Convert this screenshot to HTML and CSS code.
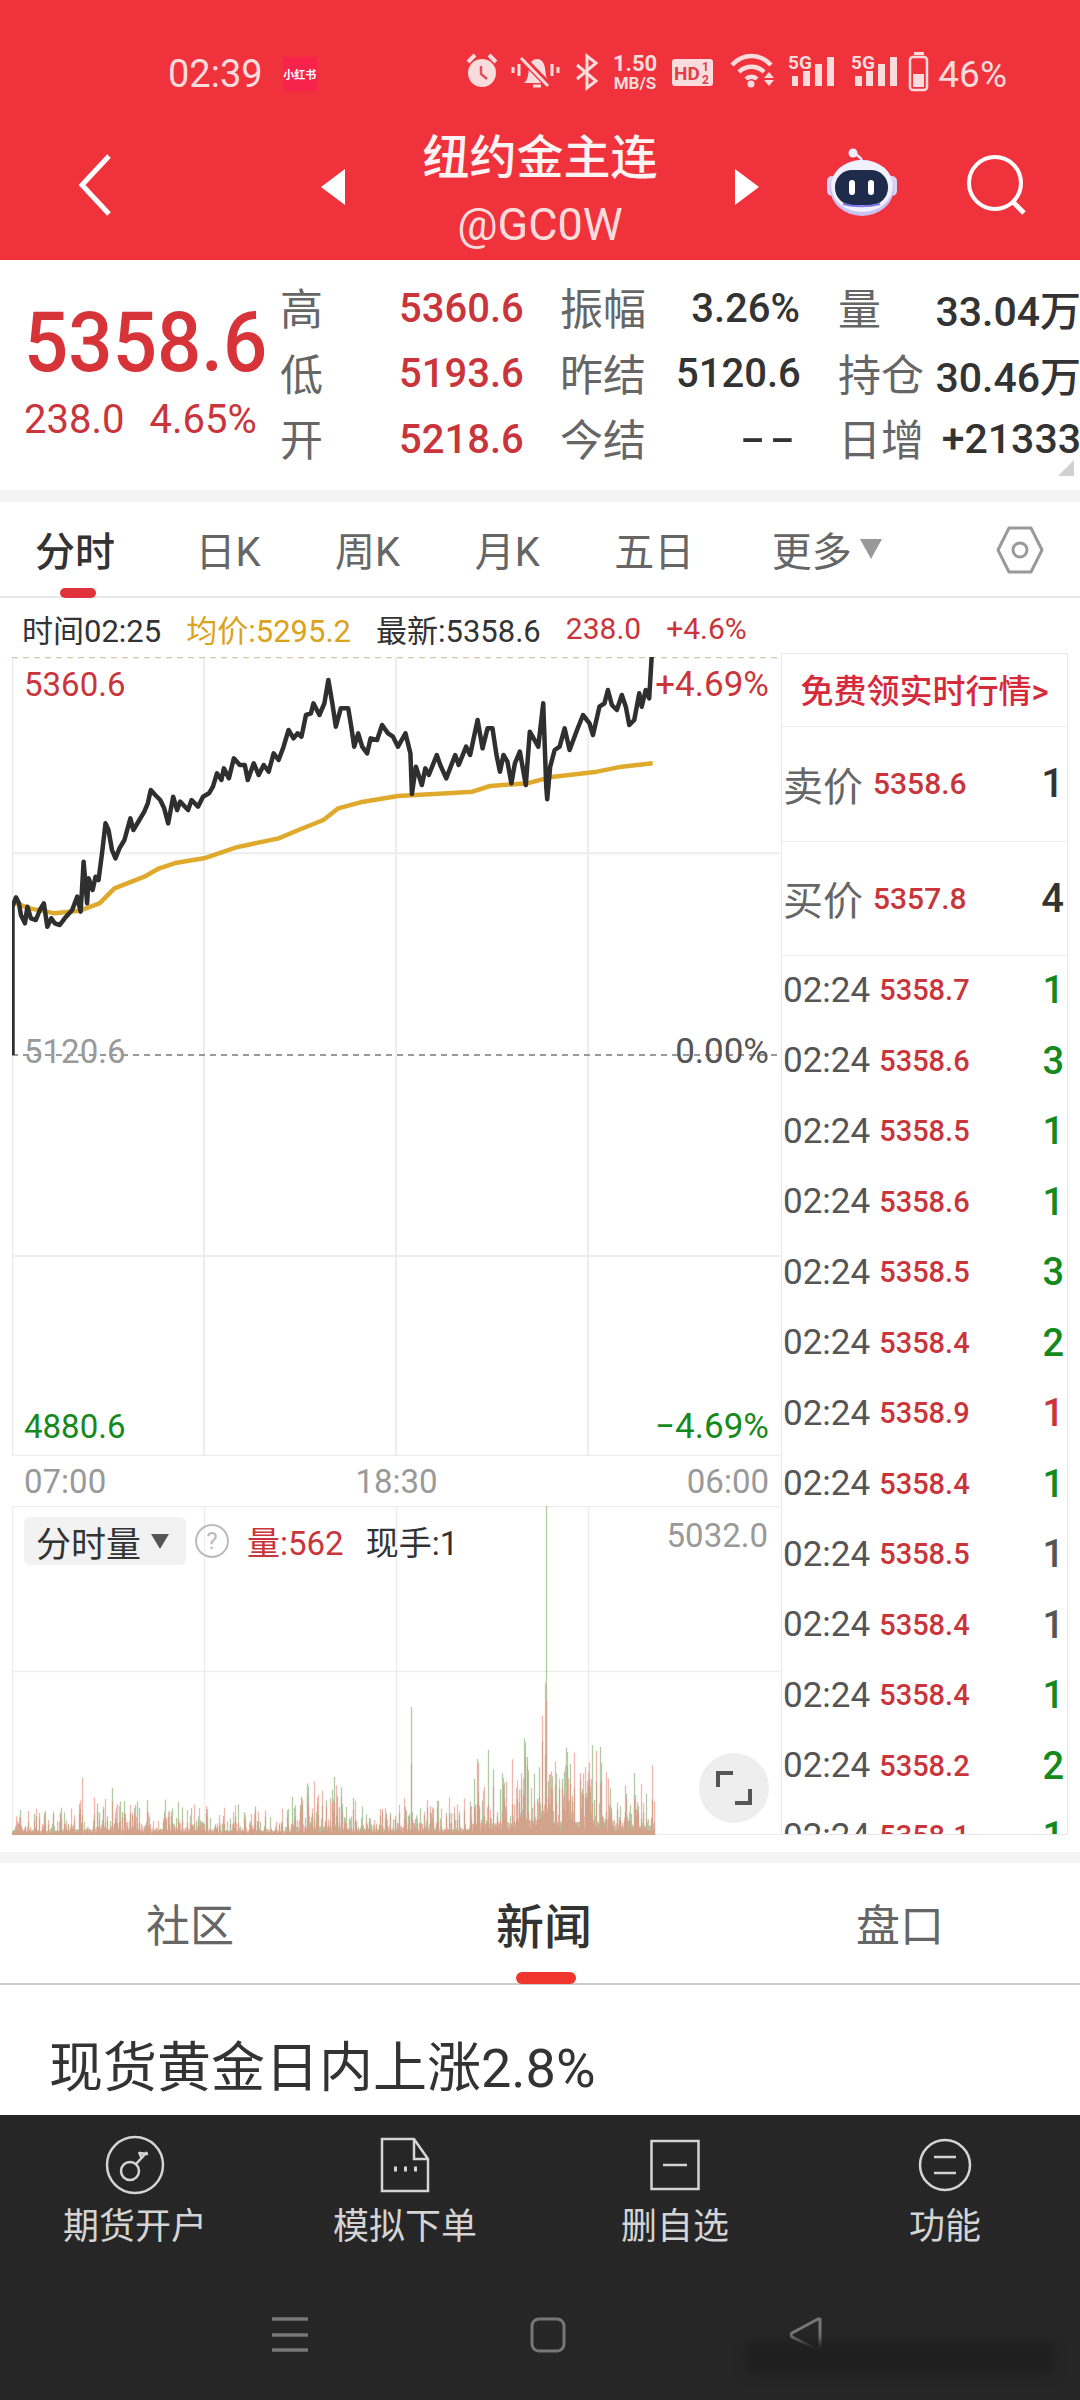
FILE: index.html
```html
<!DOCTYPE html>
<html lang="zh">
<head>
    <meta charset="UTF-8">
    <title>纽约金主连</title>
    <link rel="stylesheet" href="styles.css">
</head>
<body>
<div class="header">
    <div class="status">
        <span class="clock">02:39</span>
        <span class="badge">小红书</span>
        <svg class="status-icons" width="468" height="50" viewBox="467 50 468 50">
            <circle cx="483" cy="74" r="14" fill="#fbdcdc"/>
            <path d="M469 63l7-7M490 56l7 7" fill="none" stroke="#fbdcdc" stroke-width="4"/>
            <path d="M482 67v8l6 5" fill="none" stroke="#e0505a" stroke-width="2.5"/>
            <path d="M525 84c4-3 4-8 5-15 1-6 4-9 8-9s7 3 8 9c1 7 1 12 5 15z" fill="#fbdcdc"/>
            <path d="M534 87h8" stroke="#fbdcdc" stroke-width="3"/>
            <path d="M514 68v6M520 65v12M553 65v12M559 68v6" stroke="#fbdcdc" stroke-width="3"/>
            <path d="M524 60l27 28" stroke="#f0323c" stroke-width="7"/>
            <path d="M522 59l27 28" stroke="#fbdcdc" stroke-width="3"/>
            <path d="M578 66l19 16-9 7V57l9 7-19 16" fill="none" stroke="#fbdcdc" stroke-width="3"/>
            <text x="636" y="72" class="si-speed" text-anchor="middle">1.50</text>
            <text x="636" y="90" class="si-unit" text-anchor="middle">MB/S</text>
            <rect x="673" y="60" width="41" height="27" rx="3" fill="#fbdcdc"/>
            <text x="675" y="81" class="si-hd">HD</text>
            <text x="703" y="72" class="si-hd-s">1</text>
            <text x="703" y="85" class="si-hd-s">2</text>
            <g fill="none" stroke="#fbdcdc" stroke-width="4.5">
                <path d="M733 66c11-12 28-12 39 0"/>
                <path d="M740 73c7-7 18-7 25 0"/>
                <path d="M747 80c3-3 8-3 11 0"/>
            </g>
            <circle cx="752" cy="85" r="3.5" fill="#fbdcdc"/>
            <path d="M770 73l5 6h-10zM765 81h10l-5 6z" fill="#fbdcdc"/>
            <text x="789" y="70" class="si-5g">5G</text>
            <path d="M793 77h6v10h-6zM804 72h7v15h-7zM816 65h7v22h-7zM828 58h7v29h-7z" fill="#fbdcdc"/>
            <text x="852" y="70" class="si-5g">5G</text>
            <path d="M856 77h7v10h-7zM867 72h7v15h-7zM879 65h7v22h-7zM891 58h7v29h-7z" fill="#fbdcdc"/>
            <rect x="911" y="58" width="17" height="33" rx="3" fill="none" stroke="#fbdcdc" stroke-width="2.5"/>
            <path d="M915 53h10v3h-10z" fill="#fbdcdc"/>
            <rect x="914" y="75" width="11" height="13" fill="#fbdcdc"/>
        </svg>
        <span class="batt">46%</span>
    </div>
    <div class="nav">
        <svg class="back" width="34" height="64" viewBox="0 0 34 64"><path d="M31 3L4 32l27 29" fill="none" stroke="#fff" stroke-width="5"/></svg>
        <span class="tri tri-left"></span>
        <div class="title">
            <div class="title-name">纽约金主连</div>
            <div class="title-code">@GC0W</div>
        </div>
        <span class="tri tri-right"></span>
        <svg class="robot" width="74" height="72" viewBox="0 0 74 72">
            <path d="M28 6c3 1 6 3 9 7" fill="none" stroke="#e6e3fa" stroke-width="2.5"/>
            <circle cx="28" cy="6" r="4.5" fill="#f0eefc"/>
            <rect x="2" y="29" width="70" height="20" rx="5" fill="#d8d4f6"/>
            <ellipse cx="37" cy="41" rx="32" ry="28" fill="#c9c2f2"/>
            <ellipse cx="37" cy="39" rx="31" ry="26" fill="#f1f0fd"/>
            <rect x="10" y="23" width="53" height="35" rx="17" fill="#1f2b4a"/>
            <rect x="24" y="33" width="6" height="15" rx="3" fill="#fff"/>
            <rect x="43" y="33" width="6" height="15" rx="3" fill="#fff"/>
            <path d="M18 57c11 3 26 3 37 0" fill="none" stroke="#7f78e6" stroke-width="2"/>
        </svg>
        <svg class="search" width="60" height="60" viewBox="0 0 60 60">
            <circle cx="28" cy="28" r="26" fill="none" stroke="#fff" stroke-width="4"/>
            <path d="M46 47l11 11" stroke="#fff" stroke-width="5"/>
        </svg>
    </div>
</div>

<div class="quote">
    <div class="quote-main">
        <div class="quote-price">5358.6</div>
        <div class="quote-change"><span>238.0</span><span>4.65%</span></div>
    </div>
    <div class="quote-grid">
        <span class="lab">高</span><span class="val up">5360.6</span><span class="lab">振幅</span><span class="val r">3.26%</span><span class="lab">量</span><span class="val r2">33.04万</span>
        <span class="lab">低</span><span class="val up">5193.6</span><span class="lab">昨结</span><span class="val r">5120.6</span><span class="lab">持仓</span><span class="val r2">30.46万</span>
        <span class="lab">开</span><span class="val up">5218.6</span><span class="lab">今结</span><span class="val r"><span class="dashes">--</span></span><span class="lab">日增</span><span class="val r2">+21333</span>
    </div>
    <span class="corner"></span>
</div>
<div class="strip"></div>

<div class="tabs">
    <span class="tab on">分时</span>
    <span class="tab">日K</span>
    <span class="tab">周K</span>
    <span class="tab">月K</span>
    <span class="tab">五日</span>
    <span class="tab tab-more">更多<i class="more-arrow"></i></span>
    <svg class="gear" width="48" height="50" viewBox="0 0 48 50">
        <path d="M13 3h22l11 22-11 22H13L2 25z" fill="none" stroke="#999" stroke-width="3" stroke-linejoin="round"/>
        <circle cx="24" cy="25" r="7" fill="none" stroke="#999" stroke-width="3"/>
    </svg>
</div>

<div class="info">
    <span>时间02:25</span>
    <span class="avg">均价:5295.2</span>
    <span>最新:5358.6</span>
    <span class="up info-sm">238.0</span>
    <span class="up info-sm">+4.6%</span>
</div>

<div class="market">
    <div class="charts">
        <div class="chart-main">
            <svg class="plot" viewBox="24 51 1544 2397" preserveAspectRatio="none">
                <g class="grid">
                    <path d="M25 51V2448M410 51V2448M796 51V2448M1182 51V2448M24 640H1568M24 1848H1568M24 2447H1568"/>
                </g>
                <path class="dash dash-top" d="M24 52H1568"/>
                <path class="dash dash-mid" d="M24 1245H1568"/>
                <path class="avg-line" d="M32 790L60 805 110 820 160 812 200 790 230 745 290 710 320 685 355 668 410 655 475 622 560 595 600 570 650 540 680 505 730 485 800 468 900 460 950 455 985 438 1060 430 1105 412 1200 395 1250 380 1312 370"/>
                <path class="price-line" d="M25 1245L25 800 32 772 38 790 42 825 50 850 55 800 62 835 72 840 80 810 88 790 95 860 103 835 110 850 120 855 130 835 145 810 155 770 162 815 168 665 175 790 178 715 186 750 192 710 198 720 205 640 212 550 218 570 225 630 232 655 240 625 250 600 262 535 268 570 280 540 290 515 297 490 303 450 312 465 322 480 330 505 338 550 348 470 356 510 362 485 378 510 385 480 398 500 408 470 420 460 428 440 436 400 445 420 450 385 460 415 470 355 482 375 492 375 498 420 510 370 520 405 530 375 540 395 550 340 560 360 570 320 580 270 590 295 598 280 606 290 615 225 625 220 630 190 642 225 652 190 660 120 668 190 675 260 685 205 700 205 706 260 712 320 720 280 728 320 738 340 745 295 758 300 768 255 780 280 790 290 800 320 815 280 825 340 828 462 836 380 848 435 855 385 862 405 878 345 885 375 897 415 915 345 922 375 937 320 945 345 960 240 970 325 980 265 990 265 998 345 1005 395 1012 345 1020 365 1028 430 1035 370 1045 335 1057 435 1065 275 1082 320 1092 190 1098 440 1100 478 1106 380 1115 330 1125 320 1135 265 1145 330 1160 270 1172 225 1185 250 1192 285 1205 200 1215 190 1222 150 1230 195 1240 210 1250 165 1258 200 1265 255 1275 240 1285 160 1290 200 1298 150 1305 175 1310 50"/>
            </svg>
            <span class="tag tag-top-l up">5360.6</span>
            <span class="tag tag-right tag-top-r up">+4.69%</span>
            <span class="tag tag-mid-l">5120.6</span>
            <span class="tag tag-right tag-mid-r">0.00%</span>
            <span class="tag tag-bot-l down">4880.6</span>
            <span class="tag tag-right tag-bot-r down">−4.69%</span>
        </div>
        <div class="times"><span>07:00</span><span>18:30</span><span>06:00</span></div>
        <div class="chart-vol">
            <svg class="plot" id="volPlot" viewBox="0 0 768 329">
                <path class="grid-thin" d="M.5 0V329M192.5 0V329M384.5 0V329M576.5 0V329M0 165.5H768M0 .5H768M0 328.5H768"/>
                <path id="volGreen" class="bar-green" d=""/>
                <path id="volRed" class="bar-red" d=""/>
            </svg>
            <div class="vol-head">
                <span class="vol-pill">分时量<i class="pill-arrow"></i></span>
                <span class="vol-help">?</span>
                <span class="up vol-num">量:562</span>
                <span class="vol-num">现手:1</span>
            </div>
            <span class="vol-max">5032.0</span>
            <span class="expand">
                <svg width="38" height="38" viewBox="0 0 38 38"><path d="M3 18V4h15M35 20v14H20" fill="none" stroke="#555" stroke-width="4"/></svg>
            </span>
        </div>
    </div>

    <div class="panel">
        <div class="panel-ad">免费领实时行情&gt;</div>
        <div class="panel-quote"><span class="pq-lab">卖价</span><span class="pq-price">5358.6</span><span class="pq-qty">1</span></div>
        <div class="panel-quote"><span class="pq-lab">买价</span><span class="pq-price">5357.8</span><span class="pq-qty">4</span></div>
        <div class="ticks">
            <div class="tick"><span class="t-time">02:24</span><span class="t-price">5358.7</span><span class="t-qty down">1</span></div>
            <div class="tick"><span class="t-time">02:24</span><span class="t-price">5358.6</span><span class="t-qty down">3</span></div>
            <div class="tick"><span class="t-time">02:24</span><span class="t-price">5358.5</span><span class="t-qty down">1</span></div>
            <div class="tick"><span class="t-time">02:24</span><span class="t-price">5358.6</span><span class="t-qty down">1</span></div>
            <div class="tick"><span class="t-time">02:24</span><span class="t-price">5358.5</span><span class="t-qty down">3</span></div>
            <div class="tick"><span class="t-time">02:24</span><span class="t-price">5358.4</span><span class="t-qty down">2</span></div>
            <div class="tick"><span class="t-time">02:24</span><span class="t-price">5358.9</span><span class="t-qty up">1</span></div>
            <div class="tick"><span class="t-time">02:24</span><span class="t-price">5358.4</span><span class="t-qty down">1</span></div>
            <div class="tick"><span class="t-time">02:24</span><span class="t-price">5358.5</span><span class="t-qty">1</span></div>
            <div class="tick"><span class="t-time">02:24</span><span class="t-price">5358.4</span><span class="t-qty">1</span></div>
            <div class="tick"><span class="t-time">02:24</span><span class="t-price">5358.4</span><span class="t-qty down">1</span></div>
            <div class="tick"><span class="t-time">02:24</span><span class="t-price">5358.2</span><span class="t-qty down">2</span></div>
            <div class="tick"><span class="t-time">02:24</span><span class="t-price">5358.1</span><span class="t-qty down">1</span></div>
        </div>
    </div>
</div>
<div class="strip strip-low"></div>

<div class="news-tabs">
    <span class="news-tab">社区</span>
    <span class="news-tab on">新闻</span>
    <span class="news-tab">盘口</span>
</div>
<div class="article">现货黄金日内上涨2.8%</div>

<div class="bottom">
    <div class="tools">
        <div class="tool">
            <svg width="60" height="60" viewBox="0 0 60 60" fill="none" stroke="#d4d4d4" stroke-width="2.5">
                <circle cx="30" cy="30" r="28"/>
                <circle cx="25" cy="36" r="9"/>
                <path d="M31 29l11-12M34 18l9 1M37 24l-3-7"/>
            </svg>
            <span>期货开户</span>
        </div>
        <div class="tool">
            <svg width="60" height="60" viewBox="0 0 60 60" fill="none" stroke="#d4d4d4" stroke-width="2.5">
                <path d="M7 4h32l14 20v32H7z"/>
                <path d="M39 4v20h14"/>
                <path d="M19 34h3M29 34h3M39 34h3" stroke-width="5"/>
            </svg>
            <span>模拟下单</span>
        </div>
        <div class="tool">
            <svg width="60" height="60" viewBox="0 0 60 60" fill="none" stroke="#d4d4d4" stroke-width="2.5">
                <rect x="6.5" y="6" width="47" height="48"/>
                <path d="M18 30h24"/>
            </svg>
            <span>删自选</span>
        </div>
        <div class="tool">
            <svg width="60" height="60" viewBox="0 0 60 60" fill="none" stroke="#d4d4d4" stroke-width="2.5">
                <circle cx="30" cy="30" r="25"/>
                <path d="M19 22h22M19 38h22"/>
            </svg>
            <span>功能</span>
        </div>
    </div>
    <div class="sys-nav">
        <svg width="36" height="36" viewBox="0 0 36 36"><path d="M0 2h36M0 18h36M0 33h36" stroke="#777" stroke-width="3.5"/></svg>
        <svg width="36" height="36" viewBox="0 0 36 36"><rect x="2" y="2" width="32" height="32" rx="7" fill="none" stroke="#777" stroke-width="3"/></svg>
        <svg width="36" height="36" viewBox="0 0 36 36"><path d="M32 2v32L4 20c-1-1-1-3 0-4L30 2z" fill="none" stroke="#777" stroke-width="3" stroke-linejoin="round"/></svg>
        <span class="smudge"></span>
    </div>
</div>
<script src="volume.js"></script>
</body>
</html>
```

FILE: styles.css
```css
* {
    margin: 0;
    padding: 0;
    box-sizing: border-box;
}

html, body {
    width: 1080px;
    height: 2400px;
    overflow: hidden;
    background: #fff;
}

body {
    font-family: Roboto, "Noto Sans CJK SC", sans-serif;
    color: #333;
}

i {
    font-style: normal;
}

.up { color: #c9353b; }
.down { color: #158a1c; }

/* header */
.header {
    height: 260px;
    background: #f0323c;
    color: #fff;
}

.status {
    display: flex;
    align-items: center;
    height: 50px;
    padding: 0 73px 0 168px;
    position: relative;
    top: 49px;
}

.clock {
    font-size: 38px;
    color: #fbdcdc;
}

.badge {
    display: flex;
    align-items: center;
    justify-content: center;
    width: 34px;
    height: 34px;
    margin-left: 20px;
    background: #f8234a;
    font-size: 11px;
    font-weight: 700;
    white-space: nowrap;
    color: #fff;
}

.status-icons {
    margin-left: auto;
    flex: none;
}

.si-speed { font: 700 22px Roboto, sans-serif; fill: #fbdcdc; }
.si-unit { font: 700 17px Roboto, sans-serif; fill: #fbdcdc; }
.si-hd { font: 700 19px Roboto, sans-serif; fill: #e0404a; }
.si-hd-s { font: 700 12px Roboto, sans-serif; fill: #e0404a; }
.si-5g { font: 700 19px Roboto, sans-serif; fill: #fbdcdc; }

.batt {
    margin-left: 4px;
    font-size: 37px;
    color: #fbdcdc;
}

.nav {
    display: flex;
    align-items: center;
    height: 130px;
    margin-top: 70px;
    padding-left: 78px;
}

.back {
    flex: none;
}

.tri {
    flex: none;
    width: 0;
    height: 0;
    margin-top: 4px;
    border-top: 18px solid transparent;
    border-bottom: 18px solid transparent;
}

.tri-left {
    margin-left: 209px;
    border-right: 24px solid #fff;
}

.tri-right {
    border-left: 24px solid #fff;
}

.title {
    align-self: flex-start;
    width: 390px;
    margin-top: 5px;
    text-align: center;
}

.title-name {
    font-size: 47px;
    font-weight: 500;
    line-height: 66px;
    color: #fdf3f3;
}

.title-code {
    font-size: 45px;
    line-height: 68px;
    color: #fbdcdc;
}

.robot {
    flex: none;
    margin-left: 66px;
    margin-top: -4px;
}

.search {
    flex: none;
    margin-left: 68px;
}

/* quote */
.quote {
    position: relative;
    display: flex;
    height: 230px;
    background: #fff;
}

.quote-main {
    flex: none;
    width: 280px;
    padding-left: 24px;
}

.quote-price {
    margin-top: 33px;
    font-size: 78px;
    line-height: 100px;
    font-weight: 500;
    color: #d7343a;
    transform: scaleY(1.08);
}

.quote-change {
    display: flex;
    gap: 25px;
    margin-top: 4px;
    font-size: 40px;
    line-height: 46px;
    color: #c9353b;
}

.quote-grid {
    display: grid;
    grid-template-columns: 119px 161px 116px 162px 86px 157px;
    grid-auto-rows: 65.5px;
    align-items: center;
    padding-top: 15px;
}

.lab {
    margin-top: -3px;
    font-size: 43px;
    color: #666;
    white-space: nowrap;
}

.val {
    margin-top: 1px;
    font-size: 40px;
    font-weight: 500;
    white-space: nowrap;
}

.val.r {
    padding-right: 38px;
    text-align: right;
    color: #333;
}

.val.r2 {
    font-size: 41px;
    text-align: right;
    color: #333;
}

.dashes {
    display: inline-block;
    letter-spacing: 3px;
    transform: scaleX(1.8);
    transform-origin: right center;
}

.corner {
    position: absolute;
    right: 6px;
    bottom: 14px;
    width: 0;
    height: 0;
    border-left: 16px solid transparent;
    border-bottom: 16px solid #d0d0d0;
}

.strip {
    height: 12px;
    background: #f4f4f4;
}

/* period tabs */
.tabs {
    display: flex;
    align-items: center;
    gap: 74.5px;
    height: 96px;
    padding-left: 35px;
    border-bottom: 2px solid #e8e8e8;
    position: relative;
    font-size: 40px;
    color: #666;
}

.tab {
    display: flex;
    align-items: center;
}

.tab.on {
    margin-right: 6px;
    color: #333;
    font-weight: 500;
}

.tab-more {
    margin-left: 3px;
}

.tab.on::after {
    content: "";
    position: absolute;
    left: 60px;
    bottom: -2px;
    width: 36px;
    height: 10px;
    border-radius: 5px;
    background: #e0323a;
}

.more-arrow {
    width: 0;
    height: 0;
    margin-left: 8px;
    border-left: 11px solid transparent;
    border-right: 11px solid transparent;
    border-top: 20px solid #999;
}

.gear {
    position: absolute;
    right: 36px;
    top: 23px;
}

.info {
    display: flex;
    align-items: center;
    gap: 25px;
    height: 55px;
    padding: 5px 0 0 22px;
    font-size: 31px;
}

.info-sm {
    font-size: 30px;
}

.avg { color: #dba21c; }

/* chart area */
.market {
    display: flex;
    height: 1182px;
    padding-left: 12px;
}

.charts {
    flex: none;
    width: 769px;
    padding-top: 4px;
}

.chart-main {
    position: relative;
    height: 799px;
}

.plot {
    position: absolute;
    left: 0;
    top: 0;
    width: 768px;
    height: 100%;
}

.grid path,
.grid-thin {
    fill: none;
    stroke: #ededed;
    stroke-width: 2px;
    vector-effect: non-scaling-stroke;
}

.grid-thin {
    stroke-width: 1.5px;
}

.dash {
    fill: none;
    stroke-width: 2px;
    stroke-dasharray: 6 5;
    vector-effect: non-scaling-stroke;
}

.dash-top { stroke: #d6c6a8; }
.dash-mid { stroke: #999; }

.price-line,
.avg-line {
    fill: none;
    stroke-linejoin: round;
    vector-effect: non-scaling-stroke;
}

.price-line {
    stroke: #2f2f2f;
    stroke-width: 4.5px;
}

.avg-line {
    stroke: #dfa92c;
    stroke-width: 4.5px;
}

.tag {
    position: absolute;
    font-size: 33px;
    line-height: 40px;
}

.tag-right {
    font-size: 35px;
}

.tag-top-l { left: 12px; top: 8px; }
.tag-top-r { right: 12px; top: 8px; }
.tag-mid-l { left: 12px; top: 375px; color: #999; }
.tag-mid-r { right: 12px; top: 375px; color: #555; }
.tag-bot-l { left: 12px; top: 750px; }
.tag-bot-r { right: 12px; top: 750px; }

.times {
    display: flex;
    justify-content: space-between;
    align-items: center;
    height: 50px;
    padding: 0 12px;
    font-size: 33px;
    color: #999;
}

.chart-vol {
    position: relative;
    height: 329px;
}

.bar-green {
    stroke: rgba(125, 170, 105, .6);
    stroke-width: 1.3;
    fill: none;
}

.bar-red {
    stroke: rgba(232, 135, 122, .6);
    stroke-width: 1.3;
    fill: none;
}

.vol-head {
    position: absolute;
    left: 12px;
    top: 11px;
    display: flex;
    align-items: center;
}

.vol-pill {
    display: flex;
    align-items: center;
    width: 162px;
    height: 48px;
    padding-left: 12px;
    border-radius: 6px;
    background: #f2f2f2;
    font-size: 35px;
}

.pill-arrow {
    width: 0;
    height: 0;
    margin-left: 10px;
    border-left: 9px solid transparent;
    border-right: 9px solid transparent;
    border-top: 15px solid #555;
}

.vol-help {
    display: flex;
    align-items: center;
    justify-content: center;
    width: 34px;
    height: 34px;
    margin: 0 18px 0 9px;
    border: 2px solid #bbb;
    border-radius: 50%;
    font-size: 24px;
    color: #bbb;
}

.vol-num {
    margin-right: 22px;
    font-size: 33px;
}

.vol-max {
    position: absolute;
    right: 13px;
    top: 10px;
    font-size: 33px;
    line-height: 40px;
    color: #999;
}

.expand {
    position: absolute;
    right: 12px;
    top: 247px;
    display: flex;
    align-items: center;
    justify-content: center;
    width: 70px;
    height: 70px;
    border-radius: 50%;
    background: #eee;
}

/* right panel */
.panel {
    flex: none;
    width: 287px;
    height: 1182px;
    border: 1px solid #e8e8e8;
    overflow: hidden;
}

.panel-ad {
    height: 73px;
    border-bottom: 1px solid #eee;
    font-size: 33px;
    font-weight: 500;
    line-height: 76px;
    text-align: center;
    white-space: nowrap;
    color: #d62a3a;
}

.panel-quote {
    display: flex;
    align-items: center;
    height: 114.5px;
    padding: 0 3px 0 1px;
    border-bottom: 1px solid #eee;
}

.pq-lab {
    font-size: 40px;
    color: #666;
}

.pq-price {
    margin-left: 10px;
    font-size: 30px;
    font-weight: 500;
    color: #c9353b;
}

.pq-qty {
    margin-left: auto;
    font-size: 40px;
    font-weight: 500;
    color: #333;
}

.ticks {
    height: 880px;
    overflow: hidden;
}

.tick {
    display: flex;
    align-items: center;
    height: 70.5px;
    padding: 0 1px;
    position: relative;
    top: -1px;
}

.t-time {
    font-size: 35px;
    color: #555;
}

.t-price {
    margin-left: 9px;
    font-size: 29px;
    font-weight: 500;
    color: #c9353b;
}

.t-qty {
    margin-left: auto;
    margin-right: 2px;
    font-size: 38px;
    font-weight: 500;
    color: #555;
}

.t-qty.up { color: #c9353b; }
.t-qty.down { color: #158a1c; }

.strip-low {
    margin-top: 17px;
    height: 11px;
}

/* news */
.news-tabs {
    display: grid;
    grid-template-columns: 380px 328px 372px;
    align-items: center;
    height: 122px;
    border-bottom: 2px solid #ccc;
    position: relative;
    text-align: center;
    font-size: 44px;
    color: #666;
}

.news-tab.on {
    font-size: 48px;
    font-weight: 500;
    color: #333;
}

.news-tab.on::after {
    content: "";
    position: absolute;
    left: 516px;
    bottom: -1px;
    width: 60px;
    height: 12px;
    border-radius: 6px;
    background: #f0352f;
}

.news-tab:last-child {
    padding-left: 12px;
}

.article {
    height: 130px;
    padding: 52px 0 0 49px;
    font-size: 54px;
    line-height: 64px;
    color: #333;
}

/* bottom bar */
.bottom {
    height: 285px;
    background: #262626;
}

.tools {
    display: grid;
    grid-template-columns: repeat(4, 1fr);
    padding-top: 20px;
}

.tool {
    display: flex;
    flex-direction: column;
    align-items: center;
    font-size: 36px;
    line-height: 52px;
    color: #d4d4d4;
}

.tool span {
    margin-top: 6px;
}

.sys-nav {
    position: relative;
    display: flex;
    gap: 222px;
    margin-top: 64px;
    padding-left: 272px;
}

.smudge {
    position: absolute;
    left: 745px;
    top: 24px;
    width: 310px;
    height: 34px;
    background: #1f1f1f;
    filter: blur(5px);
}
```

FILE: volume.js
```js
// volume bars: noise over a rough envelope, plus the spikes that stand out
var seed = 7;
function rnd() {
    seed = (seed * 16807) % 2147483647;
    return seed / 2147483647;
}

var base = 329;
var spikes = { 70: 57, 100: 47, 322: 58, 399: 128, 476: 85, 515: 78, 534: 329, 580: 90, 588: 88, 640: 70 };

function envelope(x) {
    if (x < 60) return 24;
    if (x < 180) return 30;
    if (x < 280) return 24;
    if (x < 330) return 44;
    if (x < 460) return 30;
    if (x < 505) return 62;
    if (x < 528) return 80;
    if (x < 542) return 125;
    if (x < 600) return 72;
    return 50;
}

var green = "", red = "";
function bar(list, x, h) {
    return list + "M" + (x + 0.5) + " " + base + "V" + (base - h).toFixed(1);
}

for (var x = 0; x <= 642; x++) {
    var r = rnd();
    var h = envelope(x) * (0.18 + r * r * r * 1.1);
    var isGreen = rnd() > 0.5;
    if (spikes[x]) {
        h = spikes[x];
        isGreen = x !== 640 && x !== 70;
    }
    var h2 = h * (0.3 + rnd() * 0.6);
    if (isGreen) {
        green = bar(green, x, h);
        red = bar(red, x, h2);
    } else {
        red = bar(red, x, h);
        green = bar(green, x, h2);
    }
}
document.getElementById("volGreen").setAttribute("d", green);
document.getElementById("volRed").setAttribute("d", red);
```
